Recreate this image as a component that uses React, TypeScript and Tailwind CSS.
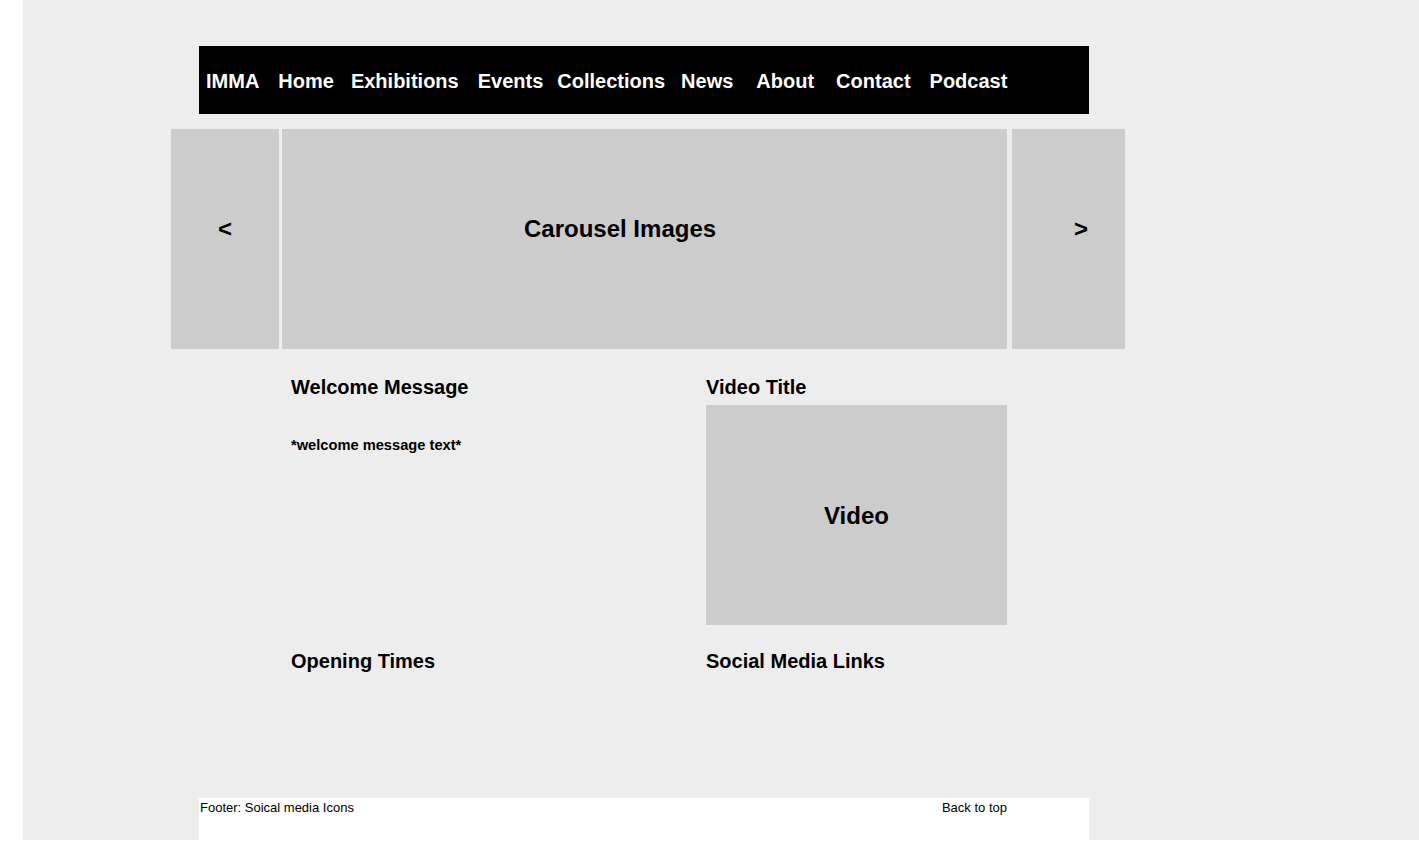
const navLinks = [
  { label: 'IMMA', gap: 'ml-0' },
  { label: 'Home', gap: 'ml-[19px]' },
  { label: 'Exhibitions', gap: 'ml-[17px]' },
  { label: 'Events', gap: 'ml-[19px]' },
  { label: 'Collections', gap: 'ml-[14px]' },
  { label: 'News', gap: 'ml-[16px]' },
  { label: 'About', gap: 'ml-[23px]' },
  { label: 'Contact', gap: 'ml-[22px]' },
  { label: 'Podcast', gap: 'ml-[19px]' }
];

export default function App() {
  return (
    <div className="min-h-screen bg-white font-['Liberation_Sans',Arial,sans-serif] text-black">
      <div className="ml-[23px] h-[840px] bg-[#ededed] pt-[46px]">
        {/* Top navigation */}
        <nav className="ml-[176px] flex h-[68px] w-[890px] bg-black pl-[7px] pt-[24px] text-[20px] font-bold leading-[23px] text-white">
          {navLinks.map((link) => (
            <a key={link.label} href="#" className={link.gap}>
              {link.label}
            </a>
          ))}
        </nav>

        {/* Carousel */}
        <div className="ml-[148px] mt-[15px] flex h-[220px] text-[24px] font-bold leading-[28px]">
          <button className="flex w-[108px] items-start justify-center bg-[#cccccc] pt-[86px]">&lt;</button>
          <div className="ml-[3px] w-[725px] bg-[#cccccc] pl-[242px] pt-[86px]">Carousel Images</div>
          <button className="ml-[5px] flex w-[113px] items-start bg-[#cccccc] pl-[62px] pt-[86px]">&gt;</button>
        </div>

        {/* Main content */}
        <div className="ml-[268px] mt-[27px] grid grid-cols-[415px_301px]">
          <div>
            <h2 className="text-[20px] font-bold leading-[23px]">Welcome Message</h2>
            <p className="mt-[38px] text-[14.67px] font-bold leading-[17px]">*welcome message text*</p>
          </div>
          <div>
            <h2 className="text-[20px] font-bold leading-[23px]">Video Title</h2>
            <div className="mt-[6px] flex h-[220px] w-[301px] items-center justify-center bg-[#cccccc] pt-[2px] text-[24px] font-bold leading-[28px]">
              Video
            </div>
          </div>
          <h2 className="mt-[25px] text-[20px] font-bold leading-[23px]">Opening Times</h2>
          <h2 className="mt-[25px] text-[20px] font-bold leading-[23px]">Social Media Links</h2>
        </div>

        {/* Footer */}
        <footer className="ml-[176px] mt-[125px] flex h-[42px] w-[890px] justify-between bg-white pl-[1px] pr-[82px] pt-[2px] text-[13px] leading-[15px]">
          <span>Footer: Soical media Icons</span>
          <a href="#">Back to top</a>
        </footer>
      </div>
    </div>
  );
}
